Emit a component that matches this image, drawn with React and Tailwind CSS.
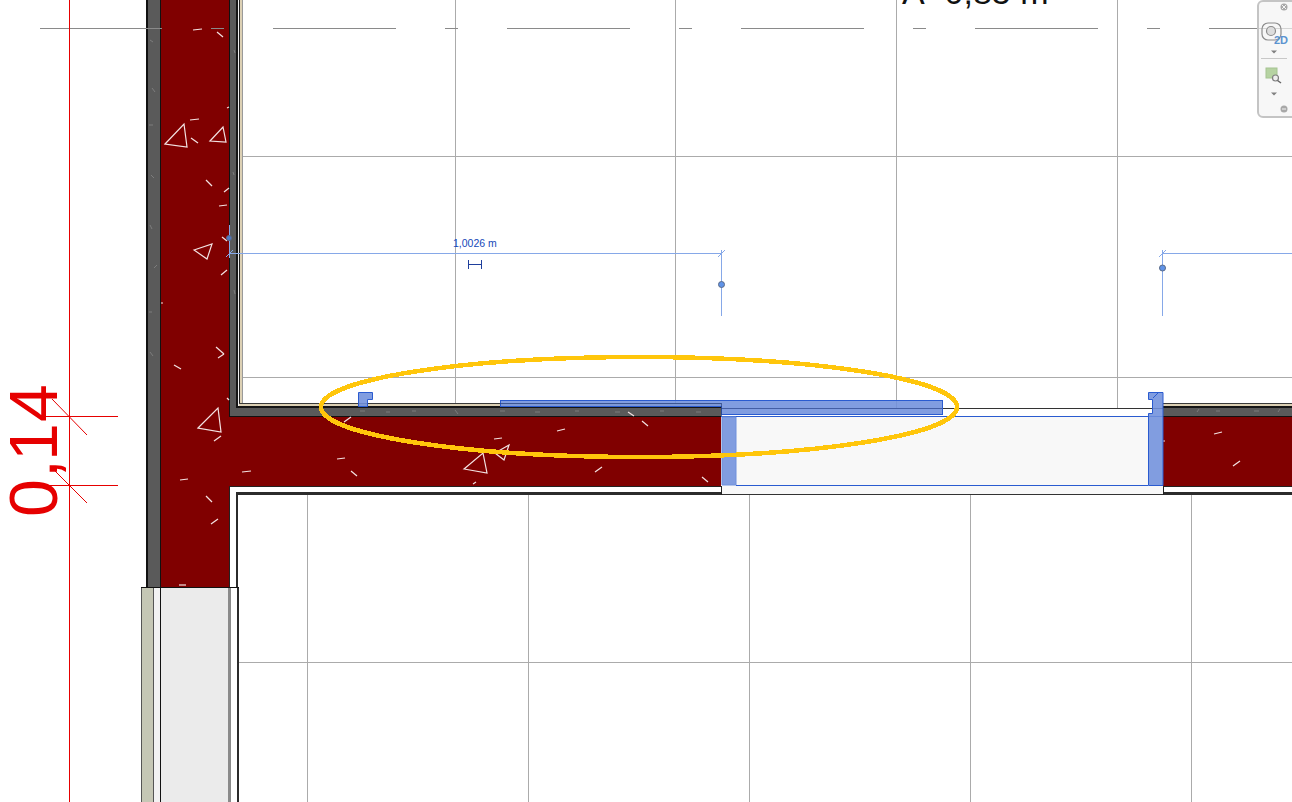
const hatch = [
  [193, 30, 202, 29], [217, 32, 223, 37], [190, 120, 199, 119], [191, 138, 198, 143],
  [227, 108, 229, 107], [206, 180, 212, 186], [224, 192, 229, 188], [219, 206, 227, 205],
  [222, 237, 227, 241], [221, 275, 227, 270], [161, 303, 163, 303], [216, 347, 224, 354],
  [224, 354, 218, 358], [174, 365, 181, 369], [227, 398, 229, 400], [214, 441, 221, 436],
  [242, 472, 251, 471], [180, 480, 188, 479], [206, 496, 212, 502], [211, 524, 218, 519],
  [179, 585, 186, 585], [344, 422, 351, 417], [337, 459, 345, 458], [351, 471, 357, 476],
  [557, 431, 565, 429], [494, 439, 502, 438], [595, 472, 602, 467], [473, 484, 476, 482],
  [628, 412, 634, 416], [642, 421, 648, 426], [702, 477, 708, 482], [1214, 434, 1222, 432],
  [1233, 466, 1240, 461], [1163, 441, 1165, 441],
];

const triangles = [
  '165,144 184,124 187,147',
  '210,141 223,127 226,142',
  '194,250 212,244 207,259',
  '198,428 218,408 221,432',
  '464,469 483,453 487,473',
  '495,453 509,445 504,460',
];

// small specks in the grey wall finish
const specks = [
  [150, 40, 153, 42], [152, 88, 155, 92], [149, 125, 153, 125], [151, 175, 154, 178],
  [150, 225, 152, 229], [154, 268, 157, 265], [149, 312, 152, 312], [150, 352, 153, 356],
  [234, 50, 235, 53], [233, 172, 234, 175], [234, 290, 235, 294], [360, 411, 365, 411],
  [386, 412, 390, 412], [412, 411, 416, 411], [455, 410, 458, 414], [500, 411, 505, 411],
  [535, 412, 540, 412], [575, 411, 579, 411], [615, 412, 620, 412], [660, 411, 664, 411],
  [696, 412, 701, 412], [1197, 412, 1199, 409], [1216, 411, 1220, 411], [1254, 411, 1259, 411],
  [1278, 412, 1280, 409],
];

const axisDashes = [
  [40, 162], [211, 224], [273, 396], [445, 458], [507, 630], [679, 692],
  [741, 864], [913, 926], [975, 1098], [1147, 1160], [1209, 1292],
];

function Wall({ x, width }) {
  return (
    <g shapeRendering="crispEdges">
      <rect x={x} y={403} width={width} height={1} fill="#3a3a3a" />
      <rect x={x} y={404} width={width} height={2} fill="#dcd0b4" />
      <rect x={x} y={406} width={width} height={2} fill="#151515" />
      <rect x={x} y={408} width={width} height={8} fill="#5a5a5a" />
      <rect x={x} y={416} width={width} height={1} fill="#111111" />
      <rect x={x} y={417} width={width} height={69} fill="#800000" />
      <rect x={x} y={486} width={width} height={1} fill="#222222" />
      <rect x={x} y={492} width={width} height={3} fill="#2b2b2b" />
    </g>
  );
}

function Drawing() {
  return (
    <svg width="1292" height="802" viewBox="0 0 1292 802" className="block">
      {/* grid */}
      <g stroke="#ababab" strokeWidth="1" shapeRendering="crispEdges">
        <path d="M242 156.5H1292M242 377.5H1292M238 662.5H1292" />
        <path d="M455.5 0V404M675.5 0V404M896.5 0V408M1117.5 0V408" />
        <path d="M307.5 495V802M528.5 495V802M749.5 495V802M970.5 495V802M1191.5 495V802" />
      </g>

      <Wall x={243} width={478} />
      <Wall x={1163} width={129} />

      {/* left column */}
      <g shapeRendering="crispEdges">
        <rect x="146" y="0" width="2" height="587" fill="#111111" />
        <rect x="148" y="0" width="12" height="587" fill="#5a5a5a" />
        <rect x="160" y="0" width="1" height="587" fill="#111111" />
        <rect x="161" y="0" width="82" height="587" fill="#800000" />
        <rect x="229" y="0" width="1" height="416" fill="#111111" />
        <rect x="230" y="0" width="6" height="416" fill="#5a5a5a" />
        <rect x="230" y="408" width="13" height="8" fill="#5a5a5a" />
        <rect x="229" y="416" width="14" height="1" fill="#111111" />
        <rect x="236" y="0" width="2" height="408" fill="#151515" />
        <rect x="236" y="406" width="7" height="2" fill="#151515" />
        <rect x="238" y="0" width="1" height="406" fill="#f0f0f0" />
        <rect x="239" y="0" width="1" height="404" fill="#222222" />
        <rect x="239" y="403" width="4" height="1" fill="#3a3a3a" />
        <rect x="239" y="404" width="4" height="2" fill="#dcd0b4" />
        <rect x="240" y="0" width="2" height="403" fill="#dcd0b4" />
        <rect x="242" y="0" width="1" height="403" fill="#9a9a9a" />
      </g>

      {/* inner face below the slab */}
      <g shapeRendering="crispEdges">
        <rect x="229" y="486" width="14" height="101" fill="#ffffff" />
        <rect x="243" y="486" width="478" height="6" fill="#ffffff" />
        <rect x="229" y="486" width="492" height="1" fill="#222222" />
        <rect x="229" y="486" width="1" height="101" fill="#222222" />
        <rect x="236" y="492" width="485" height="3" fill="#2b2b2b" />
        <rect x="236" y="492" width="2" height="95" fill="#2b2b2b" />
        <rect x="239" y="495" width="1" height="92" fill="#ffffff" />
        <rect x="238" y="495" width="5" height="307" fill="#ffffff" />
      </g>

      {/* lower column */}
      <g shapeRendering="crispEdges">
        <rect x="141" y="587" width="12" height="215" fill="#c5c7b5" />
        <rect x="141" y="587" width="1" height="215" fill="#555555" />
        <rect x="153" y="587" width="1" height="215" fill="#555555" />
        <rect x="154" y="587" width="6" height="215" fill="#f2f2f2" />
        <rect x="160" y="587" width="1" height="215" fill="#111111" />
        <rect x="161" y="587" width="67" height="215" fill="#ebebeb" />
        <rect x="228" y="587" width="3" height="215" fill="#8a8a8a" />
        <rect x="231" y="587" width="6" height="215" fill="#ffffff" />
        <rect x="237" y="587" width="2" height="215" fill="#2b2b2b" />
        <rect x="141" y="587" width="98" height="1" fill="#111111" />
        <path d="M243 662.5H307" stroke="#ababab" />
        <path d="M239 662.500H243" stroke="#ababab" />
      </g>

      {/* opening */}
      <g shapeRendering="crispEdges">
        <rect x="721" y="408" width="442" height="1" fill="#333333" />
        <rect x="721" y="417" width="442" height="77" fill="#f8f8f8" />
        <rect x="721" y="494" width="442" height="1" fill="#333333" />
        <rect x="721" y="486" width="1" height="9" fill="#222222" />
        <rect x="1163" y="486" width="1" height="9" fill="#222222" />
        <rect x="721" y="416" width="442" height="1" fill="#2a5bd0" />
        <rect x="736" y="485" width="412" height="1" fill="#2a5bd0" />
      </g>

      {/* hatch */}
      <g stroke="#7d7d7d" strokeWidth="1">
        {specks.map(([a, b, c, d], i) => (
          <line key={i} x1={a} y1={b} x2={c} y2={d} />
        ))}
      </g>
      <g stroke="#f3e3e3" strokeWidth="1.2" fill="none">
        {hatch.map(([a, b, c, d], i) => (
          <line key={i} x1={a} y1={b} x2={c} y2={d} />
        ))}
        {triangles.map((p) => (
          <polygon key={p} points={p} />
        ))}
      </g>

      {/* axis */}
      <g stroke="#8a8a8a" strokeWidth="1" shapeRendering="crispEdges">
        {axisDashes.map(([a, b]) => (
          <line key={a} x1={a} y1="28.5" x2={b} y2="28.5" />
        ))}
      </g>

      {/* door elements */}
      <g fill="#6f90dc" fillOpacity="0.88" stroke="#2a5bd0" strokeWidth="1">
        <path d="M358.5 392.5H372.5V399.5H367.5V406.5H358.5Z" />
        <path d="M722 417H736V485H722Z" stroke="#6f90dc" />
        <path d="M1148.500 392.500H1163V485.500H1148.500V413.500H1152.500V399.500H1148.500Z" />
        <path d="M1153 398L1158 393" fill="none" />
      </g>
      {/* door leaf: above the wall left of the jamb, full height right of it */}
      <path
        d="M500.500 400.500H942.500V414.500H721.500V406H500.500Z"
        fill="#6f90dc"
        fillOpacity="0.88"
        stroke="#2a5bd0"
        strokeWidth="1"
        shapeRendering="crispEdges"
      />
      <path d="M500 403.500H721.500V416" fill="none" stroke="#28407c" strokeWidth="1" opacity="0.7" shapeRendering="crispEdges" />
      <path d="M721 408.500H942" stroke="#26408a" strokeWidth="1" opacity="0.55" shapeRendering="crispEdges" />

      {/* temporary dimension */}
      <g stroke="#86a8e8" strokeWidth="1" fill="none">
        <path d="M229 253.5H721M1163 253.5H1292" />
        <path d="M229.5 225V258M721.5 250V316M1162.5 250V316" />
        <path d="M226 257L233 250M718 257L725 250M1159 257L1166 250" />
      </g>
      <circle cx="229" cy="238" r="2.5" fill="#4f7bc8" stroke="#5a6a88" />
      <circle cx="721.5" cy="284.5" r="3" fill="#5f93e8" stroke="#5a6a88" />
      <circle cx="1162.5" cy="268" r="3" fill="#5f93e8" stroke="#5a6a88" />
      <text x="453" y="247" fontSize="10.5" fill="#1548b8">1,0026 m</text>
      <path d="M468.5 260V269M481.5 260V269M468 264.5H482" stroke="#1f3f9c" strokeWidth="1" fill="none" shapeRendering="crispEdges" />

      {/* red dimension */}
      <g stroke="#e60000" strokeWidth="1" fill="none">
        <path d="M69.5 0V802" shapeRendering="crispEdges" />
        <path d="M45 416.5H118M45 485.5H118" shapeRendering="crispEdges" />
        <path d="M52 399L87 435M52 468L87 503" />
      </g>
      <text
        transform="translate(57 517) rotate(-90)"
        x="0 39 56 95"
        fontSize="68"
        fill="#e60000"
      >
        0,14
      </text>

      <text x="902" y="4" fontSize="34" fill="#111111">A=0,85 m</text>

      <ellipse
        cx="639"
        cy="407"
        rx="318"
        ry="50"
        fill="none"
        stroke="#ffc60b"
        strokeWidth="4.5"
        shapeRendering="crispEdges"
      />
    </svg>
  );
}

function ViewBar() {
  return (
    <div className="absolute right-[-6px] top-0 w-[41px] h-[118px] rounded-md border-2 border-[#c4c4c4] bg-[#f3f3f3]/70">
      <svg width="37" height="114" viewBox="0 0 37 114" className="block">
        <circle cx="25" cy="5" r="3.500" fill="#a8a8a8" />
        <path d="M23 3L27 7M27 3L23 7" stroke="#f3f3f3" strokeWidth="1" />
        <rect x="3" y="21" width="19" height="17" rx="6" fill="none" stroke="#8c8c8c" strokeWidth="1.2" />
        <circle cx="12" cy="29" r="4.500" fill="#dddddd" stroke="#8c8c8c" strokeWidth="1.2" />
        <text x="15" y="42" fontSize="11" fontWeight="700" fill="#5b93cf">2D</text>
        <path d="M12 48.500H18L15 51.500Z" fill="#808080" />
        <path d="M2 56.500H28" stroke="#c8c8c8" />
        <rect x="7" y="66" width="11" height="10" fill="#b6d3a2" stroke="#a6c492" />
        <circle cx="16.500" cy="76" r="3" fill="#eeeeee" stroke="#808080" strokeWidth="1.2" />
        <path d="M18.500 78.500L22 81" stroke="#666666" strokeWidth="1.500" />
        <path d="M12 90.500H18L15 93.500Z" fill="#808080" />
        <circle cx="25" cy="107" r="3.500" fill="#a8a8a8" />
        <path d="M23 107H27" stroke="#f3f3f3" strokeWidth="1" />
      </svg>
    </div>
  );
}

export default function App() {
  return (
    <div className="relative w-[1292px] h-[802px] overflow-hidden bg-white font-['Liberation_Sans',Arial,sans-serif]">
      <Drawing />
      <ViewBar />
    </div>
  );
}
